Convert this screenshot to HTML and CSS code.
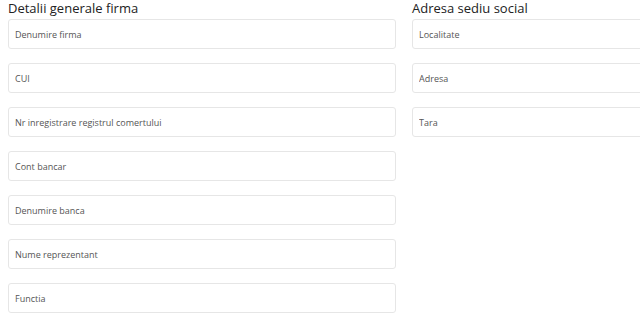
FILE: index.html
```html
<!DOCTYPE html>
<html lang="ro">
<head>
    <meta charset="UTF-8">
    <title>Date firma</title>
    <link rel="stylesheet" href="styles.css">
</head>
<body>
    <div class="page">
        <div class="form-columns">
            <section class="form-group">
                <h3>Detalii generale firma</h3>
                <input type="text" placeholder="Denumire firma">
                <input type="text" placeholder="CUI">
                <input type="text" placeholder="Nr inregistrare registrul comertului">
                <input type="text" placeholder="Cont bancar">
                <input type="text" placeholder="Denumire banca">
                <input type="text" placeholder="Nume reprezentant">
                <input type="text" placeholder="Functia">
            </section>
            <section class="form-group">
                <h3>Adresa sediu social</h3>
                <input type="text" placeholder="Localitate">
                <input type="text" placeholder="Adresa">
                <input type="text" placeholder="Tara">
            </section>
        </div>
    </div>
</body>
</html>
```

FILE: styles.css
```css
body {
    margin: 0;
    font-family: "Open Sans", sans-serif;
    background-color: #fff;
    color: #222;
}

.page {
    width: 100%;
    overflow: hidden;
}

.form-columns {
    display: grid;
    grid-template-columns: 388px 388px;
    column-gap: 16px;
    width: 792px;
    padding: 0 8px;
}

.form-group {
    display: flex;
    flex-direction: column;
    gap: 14px;
}

.form-group h3 {
    margin: 0 0 -12px 0;
    height: 17px;
    font-size: 13px;
    font-weight: 400;
    line-height: 17px;
}

input {
    box-sizing: border-box;
    height: 30px;
    padding: 0 6px;
    border: 1px solid #e6e6e6;
    border-radius: 3px;
    font-family: "Open Sans", sans-serif;
    font-size: 9px;
    color: #222;
}

input::placeholder {
    color: #555;
}
```
